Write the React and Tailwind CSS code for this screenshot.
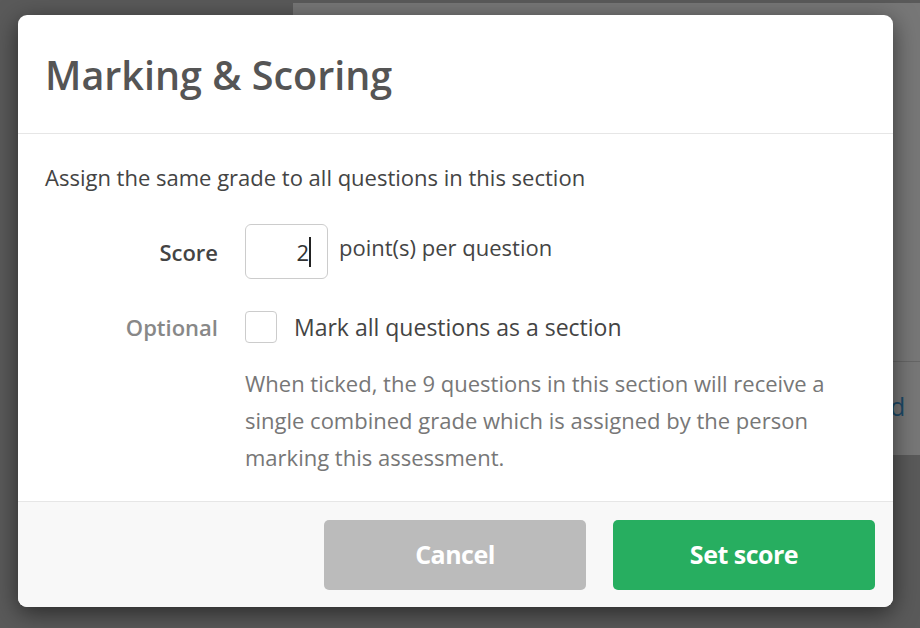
import React from 'react';

export default function App() {
  return (
    <div className="relative w-full h-[628px] overflow-hidden bg-[#5a5a5a] font-['Open_Sans','Lato',sans-serif]">
      {/* page behind the overlay */}
      <div className="absolute left-[293px] top-[3px] right-0 h-[452px] bg-[#777777]">
        <div className="mt-[358px] border-t border-[#666666]" />
        <div className="absolute left-[566px] top-[385px] text-[25px] text-[#1c4a68]">Add</div>
      </div>

      {/* modal */}
      <div className="absolute left-[18px] top-[15px] w-[875px] h-[592px] bg-white rounded-[9px] shadow-[0_6px_24px_rgba(0,0,0,0.55)] flex flex-col overflow-hidden">
        <div className="h-[119px] border-b border-[#e6e6e6] px-[27px] pt-[36px]">
          <h1 className="text-[39.5px] leading-[48px] font-semibold text-[#555555]">Marking &amp; Scoring</h1>
        </div>

        <div className="flex-1 px-[27px] pt-[29px]">
          <p className="text-[22px] leading-[28px] text-[#444444]">Assign the same grade to all questions in this section</p>

          <div className="flex items-center mt-[33px]">
            <div className="w-[173px] text-right text-[22px] font-semibold text-[#444444] pt-[2px]">Score</div>
            <div className="ml-[27px] w-[83px] h-[55px] border border-[#cccccc] rounded-[6px] flex items-center justify-end pr-[16px]">
              <span className="text-[22px] text-[#333333] leading-none">2</span>
              <span className="w-[2px] h-[30px] bg-[#222222]" />
            </div>
            <div className="ml-[11px] text-[22px] text-[#444444] -mt-[8px]">point(s) per question</div>
          </div>

          <div className="flex items-center mt-[31px]">
            <div className="w-[173px] text-right text-[22px] font-semibold text-[#888888]">Optional</div>
            <div className="ml-[27px] w-[32px] h-[32px] border border-[#cccccc] rounded-[4px] bg-white" />
            <div className="ml-[17px] text-[23px] text-[#444444]">Mark all questions as a section</div>
          </div>

          <p className="ml-[200px] mt-[20px] text-[22px] leading-[37px] text-[#777777] w-[600px]">
            When ticked, the 9 questions in this section will receive a single combined grade which is assigned by the person marking this assessment.
          </p>
        </div>

        <div className="h-[106px] bg-[#f8f8f8] border-t border-[#e6e6e6] flex justify-end items-start pt-[18px] pr-[18px] gap-[27px]">
          <button className="w-[262px] h-[70px] rounded-[5px] bg-[#bbbbbb] text-white text-[25px] font-bold tracking-[-0.5px]">Cancel</button>
          <button className="w-[262px] h-[70px] rounded-[5px] bg-[#27ae60] text-white text-[25px] font-bold tracking-[-0.5px]">Set score</button>
        </div>
      </div>
    </div>
  );
}
